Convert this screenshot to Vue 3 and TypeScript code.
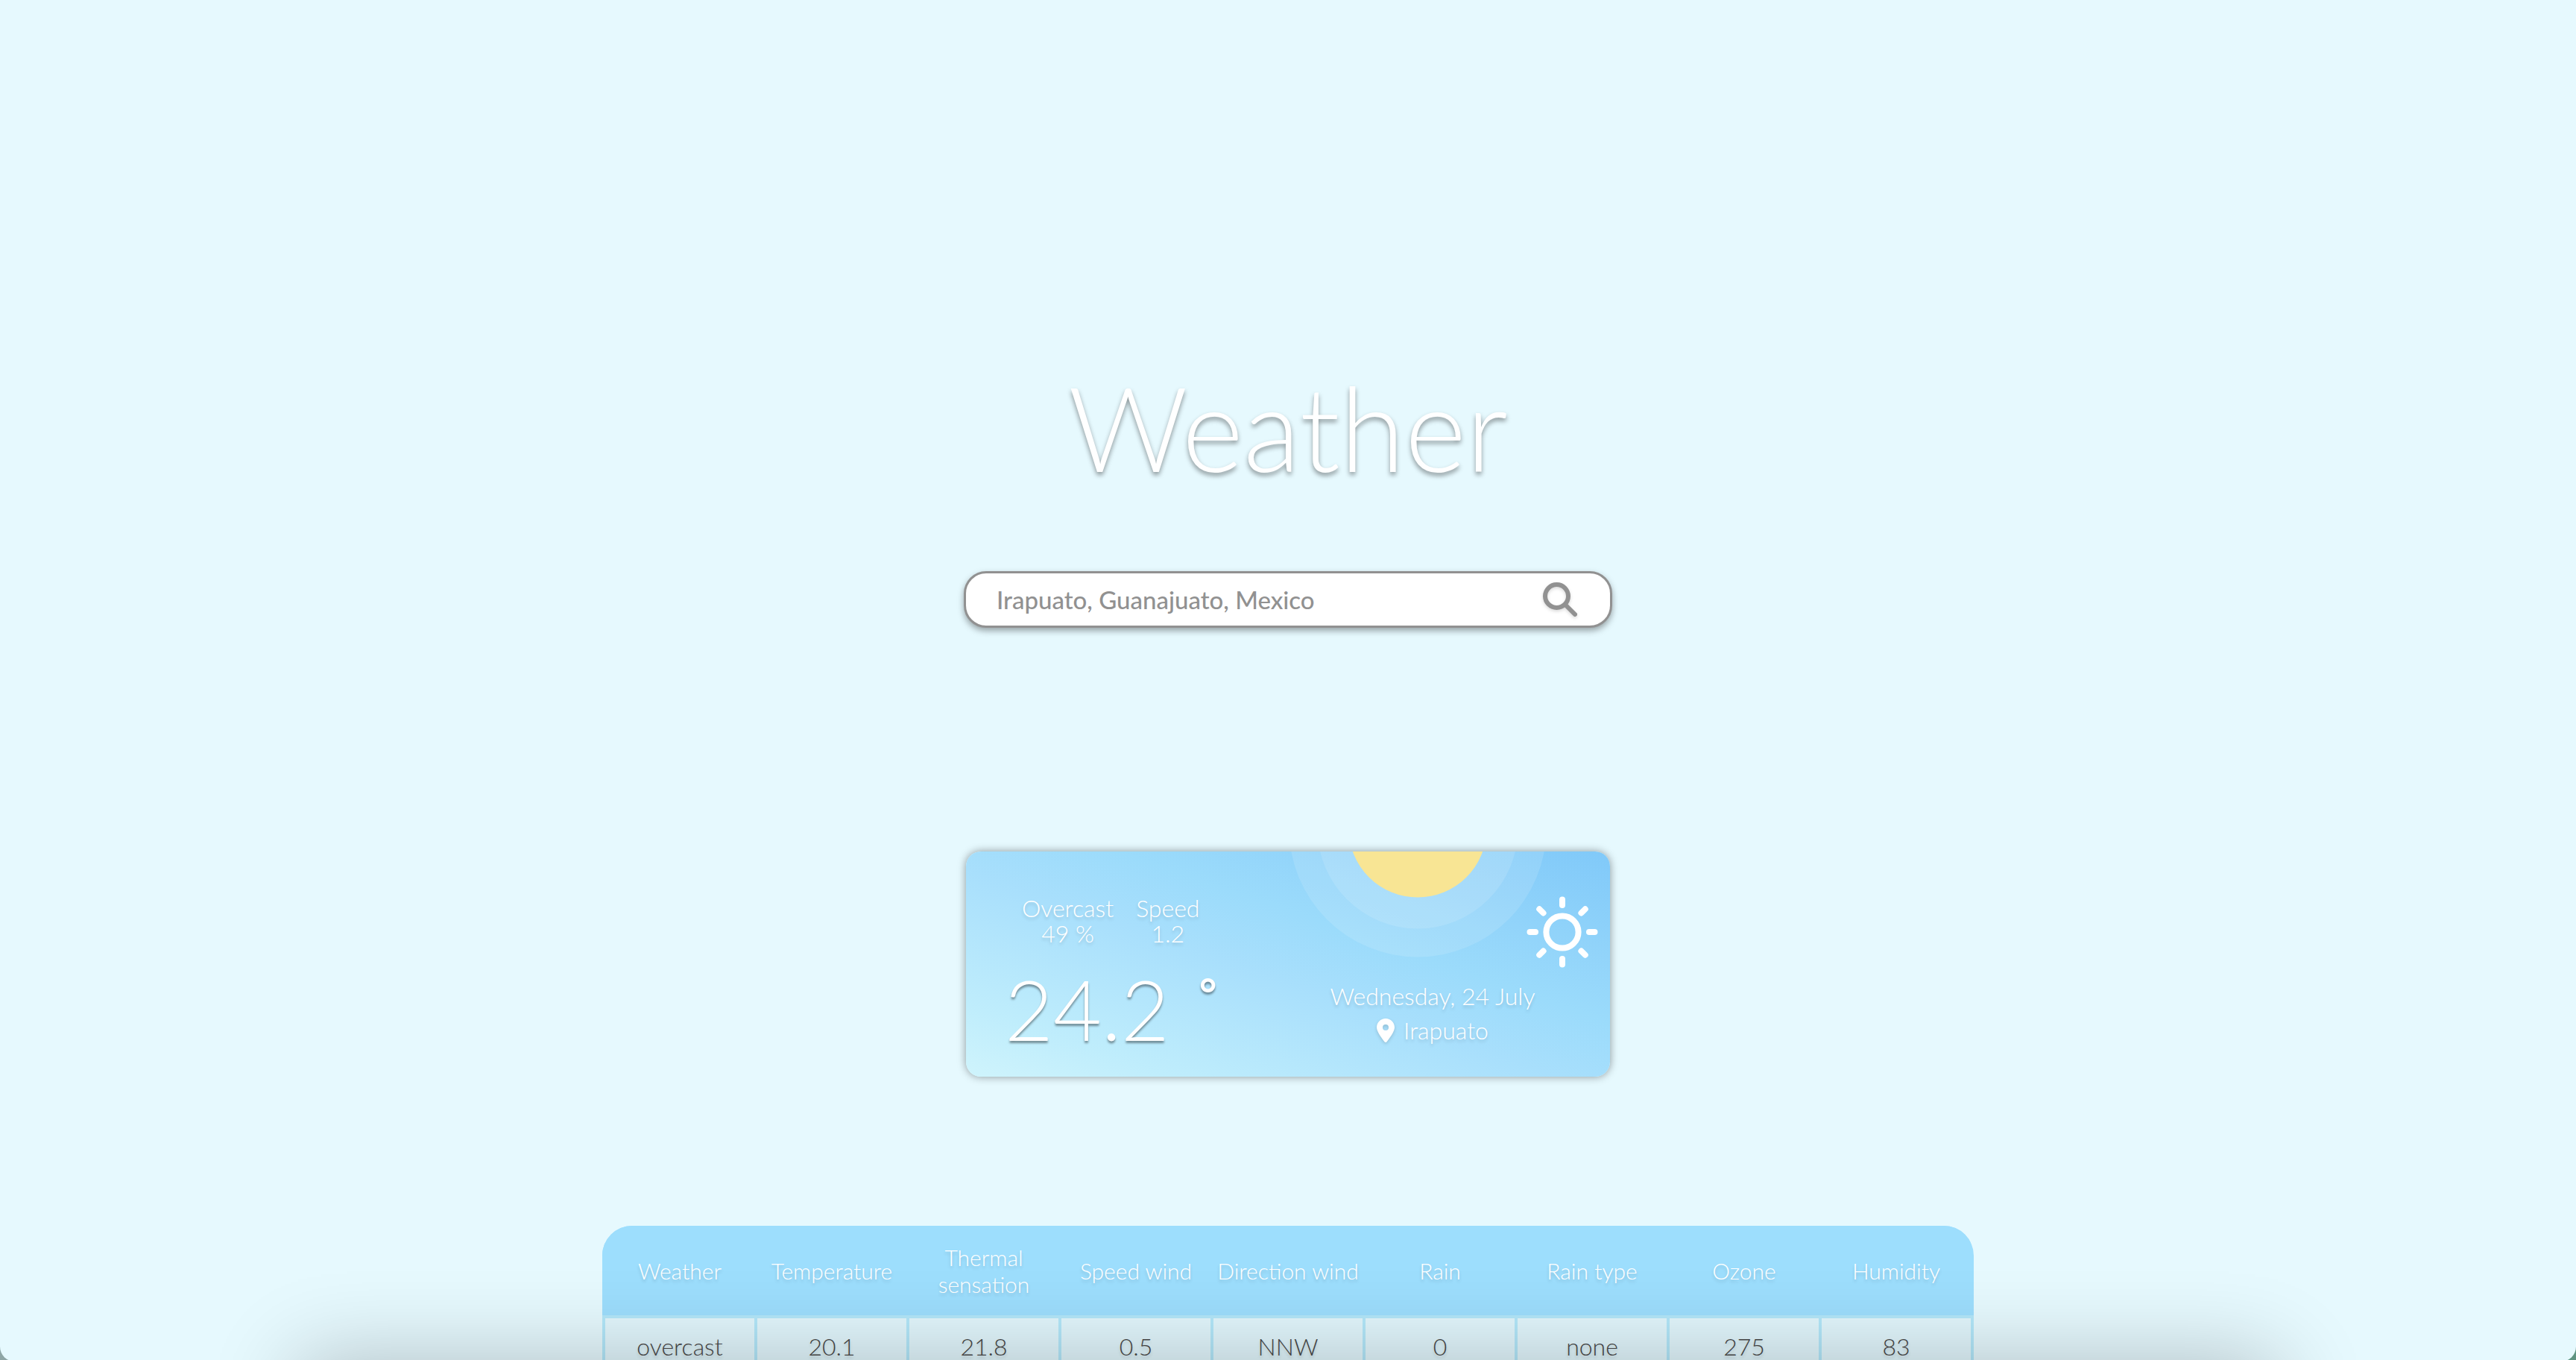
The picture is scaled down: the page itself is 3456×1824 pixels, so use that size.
<script setup lang="ts">
import { ref } from 'vue'

interface Column {
  label: string
  value: string
}

const city = ref('Irapuato, Guanajuato, Mexico')

const columns: Column[] = [
  { label: 'Weather', value: 'overcast' },
  { label: 'Temperature', value: '20.1' },
  { label: 'Thermal sensation', value: '21.8' },
  { label: 'Speed wind', value: '0.5' },
  { label: 'Direction wind', value: 'NNW' },
  { label: 'Rain', value: '0' },
  { label: 'Rain type', value: 'none' },
  { label: 'Ozone', value: '275' },
  { label: 'Humidity', value: '83' },
]

const stats: Column[] = [
  { label: 'Overcast', value: '49 %' },
  { label: 'Speed', value: '1.2' },
]

const rays = [0, 45, 90, 135, 180, 225, 270, 315]
</script>

<template>
  <main class="page">
    <h1 class="title">Weather</h1>

    <form class="search" @submit.prevent>
      <input v-model="city" class="search-input" type="text" aria-label="City" />
      <button class="search-button" type="submit" aria-label="Search">
        <svg viewBox="0 0 46 46" fill="none" stroke="currentColor" stroke-width="6" stroke-linecap="round" aria-hidden="true">
          <circle cx="18.500" cy="18.500" r="15.500" />
          <path d="M30.500 30.500L43 43" />
        </svg>
      </button>
    </form>

    <section class="card">
      <svg class="halo" viewBox="0 0 346 142" aria-hidden="true">
        <circle cx="173" cy="-31" r="172.500" fill="#fff" fill-opacity=".12" />
        <circle cx="173" cy="-31" r="134.500" fill="#fff" fill-opacity=".12" />
        <circle cx="173" cy="-31" r="92.500" fill="#f8e594" />
      </svg>

      <div class="now">
        <dl class="stats">
          <div v-for="s in stats" :key="s.label">
            <dt>{{ s.label }}</dt>
            <dd>{{ s.value }}</dd>
          </div>
        </dl>
        <p class="temperature">24.2<span class="degree">°</span></p>
      </div>

      <div class="place">
        <svg class="sun" viewBox="0 0 96 96" fill="none" stroke="#fff" stroke-width="8" stroke-linecap="round" aria-hidden="true">
          <circle cx="48" cy="48" r="21.600" />
          <line v-for="a in rays" :key="a" x1="48" y1="4.500" x2="48" y2="12" :transform="`rotate(${a} 48 48)`" />
        </svg>
        <p class="date">Wednesday, 24 July</p>
        <p class="location">
          <svg class="pin" viewBox="0 0 384 512" fill="#fff" aria-hidden="true">
            <path d="M215.700 499.200C267 435 384 279.400 384 192C384 86 298 0 192 0S0 86 0 192c0 87.400 117 243 168.300 307.200c12.300 15.300 35.100 15.300 47.400 0zM192 128a64 64 0 1 1 0 128 64 64 0 1 1 0-128z" />
          </svg>
          Irapuato
        </p>
      </div>
    </section>

    <table class="forecast">
      <thead>
        <tr>
          <th v-for="c in columns" :key="c.label" scope="col">{{ c.label }}</th>
        </tr>
      </thead>
      <tbody>
        <tr>
          <td v-for="c in columns" :key="c.label">{{ c.value }}</td>
        </tr>
      </tbody>
    </table>

    <div class="bottom-shade" aria-hidden="true"></div>
  </main>
</template>

<style>
html,
body {
  overflow: hidden;
  background: linear-gradient(90deg, #8fa6a6 50%, #5f9482 50%);
}
</style>

<style scoped>
.page {
  box-sizing: border-box;
  display: flex;
  flex-direction: column;
  align-items: center;
  height: calc(100vh + 2px);
  padding-top: 472px;
  overflow: hidden;
  border-radius: 0 0 20px 20px;
  background: #e6f9fe;
  color: #fff;
  font-family: Lato, "Noto Sans", sans-serif;
  font-size: 32px;
  font-weight: 300;
  line-height: 36px;
}

.title {
  margin: 0 0 94px;
  font-size: 158px;
  font-weight: 300;
  line-height: 200px;
  text-shadow: 0 4px 6px rgba(0, 0, 0, 0.4);
}

.search {
  box-sizing: border-box;
  display: flex;
  align-items: center;
  flex-shrink: 0;
  width: 870px;
  max-width: 90%;
  height: 76px;
  margin-bottom: 300px;
  padding: 0 44px 0 41px;
  border: 3px solid #919191;
  border-radius: 30px;
  background: #fff;
  box-shadow: 0 4px 8px rgba(0, 0, 0, 0.35);
}

.search-input {
  flex: 1;
  min-width: 0;
  padding: 0;
  border: 0;
  outline: 0;
  background: none;
  color: #919191;
  font: 500 33px/40px Lato, "Noto Sans", sans-serif;
}

.search-button {
  width: 46px;
  height: 46px;
  padding: 0;
  border: 0;
  background: none;
  color: #919191;
  filter: drop-shadow(0 2px 2px rgba(0, 0, 0, 0.15));
}

.search-button svg {
  display: block;
}

.card {
  position: relative;
  box-sizing: border-box;
  display: flex;
  flex-shrink: 0;
  justify-content: space-between;
  width: 864px;
  max-width: 90%;
  height: 302px;
  margin-bottom: 200px;
  overflow: hidden;
  border-radius: 20px;
  background: linear-gradient(to top right, #cff4fc, #bfedfc 16%, #a8dffc 46%, #9bdbfb 62%, #92d4fa 76%, #80c9f9);
  box-shadow: 0 0 12px rgba(0, 0, 0, 0.4);
  text-shadow: 0 3px 4px rgba(0, 0, 0, 0.15);
}

.halo {
  position: absolute;
  top: 0;
  left: 433px;
  width: 346px;
}

.now {
  position: relative;
  padding: 59px 0 0 52px;
}

.stats {
  display: flex;
  gap: 30px;
  margin: 0 0 20px;
  padding-left: 23px;
  line-height: 34px;
  text-align: center;
}

.stats dd {
  margin: 0;
}

.temperature {
  display: flex;
  gap: 40px;
  margin: 0;
  font-size: 112px;
  line-height: 128px;
  text-shadow: 0 3px 3px rgba(0, 0, 0, 0.4);
}

.degree {
  font-size: 56px;
  font-weight: 700;
  line-height: 86px;
}

.place {
  position: relative;
  display: flex;
  flex-direction: column;
  align-items: center;
  width: 476px;
  padding-top: 60px;
}

.sun {
  align-self: flex-end;
  width: 96px;
  height: 96px;
  margin: 0 16px 20px 0;
}

.date,
.location {
  display: flex;
  align-items: center;
  gap: 12px;
  margin: 0 0 10px;
}

.pin {
  width: 24px;
  height: 32px;
  filter: drop-shadow(0 2px 2px rgba(0, 0, 0, 0.15));
}

.forecast {
  box-sizing: border-box;
  flex-shrink: 0;
  width: 1840px;
  max-width: 96%;
  padding-right: 4px;
  table-layout: fixed;
  border-spacing: 0;
  overflow: hidden;
  border-radius: 40px 40px 0 0;
  background: linear-gradient(#9ddefd 120px, #b3e8fa 120px);
  font-size: 30px;
  text-align: center;
  text-shadow: 0 3px 4px rgba(0, 0, 0, 0.15);
}

.forecast th {
  box-sizing: border-box;
  height: 120px;
  padding: 0;
  border-left: 4px solid #9ddefd;
  background: #9ddefd;
  font-weight: 300;
}

.forecast td {
  box-sizing: border-box;
  height: 80px;
  padding: 0;
  border: 0 solid #b3e8fa;
  border-width: 4px 0 0 4px;
  background: #e2f7fd;
  color: #484848;
  font-size: 32px;
}

.bottom-shade {
  position: fixed;
  top: 100%;
  right: 400px;
  left: 400px;
  height: 400px;
  box-shadow: 0 0 110px rgba(0, 0, 0, 0.24);
}
</style>
